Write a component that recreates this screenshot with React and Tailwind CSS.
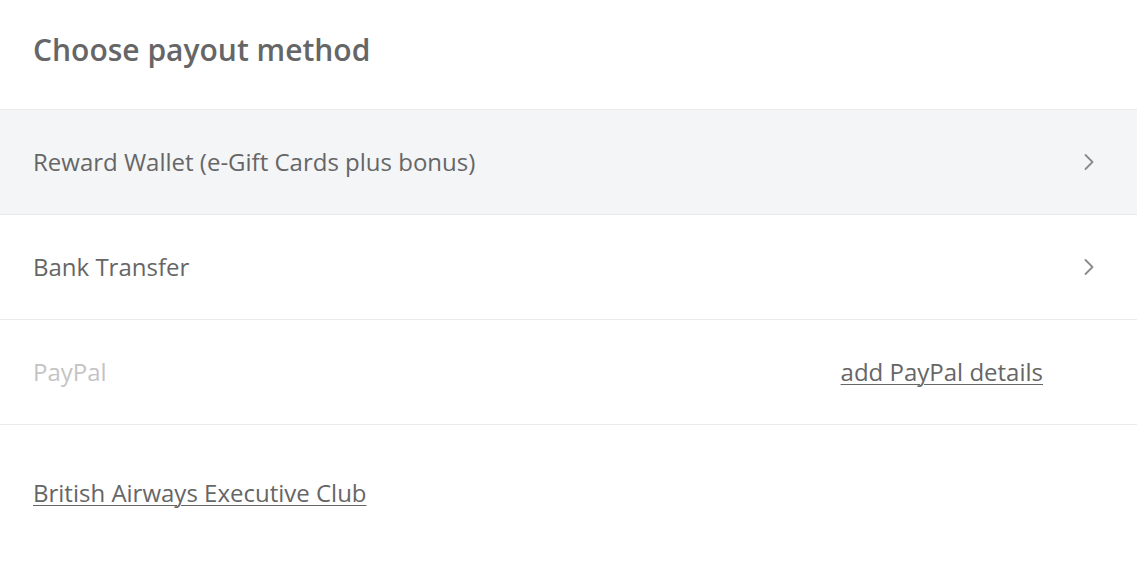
import React from "react";

const Chevron = () => (
  <svg width="12" height="18" viewBox="0 0 12 18" fill="none" className="text-[#8a8a8a]">
    <path d="M2.5 2l7 7-7 7" stroke="currentColor" strokeWidth="1.8" strokeLinecap="round" strokeLinejoin="round" />
  </svg>
);

const App = () => {
  return (
    <div className="w-[1137px] h-[561px] bg-white font-['Open_Sans',sans-serif] text-[#666666] overflow-hidden">
      <div className="h-[110px] flex items-center px-[33px] border-b border-[#ebebeb]">
        <h1 className="text-[30px] font-semibold text-[#666666] -mt-[10px]">Choose payout method</h1>
      </div>

      <button className="w-full h-[105px] flex items-center justify-between pl-[33px] pr-[42px] bg-[#f4f5f7] border-b border-[#e8e8e8] text-left">
        <span className="text-[24px]">Reward Wallet (e-Gift Cards plus bonus)</span>
        <Chevron />
      </button>

      <button className="w-full h-[105px] flex items-center justify-between pl-[33px] pr-[42px] border-b border-[#ebebeb] text-left">
        <span className="text-[24px]">Bank Transfer</span>
        <Chevron />
      </button>

      <div className="w-full h-[105px] flex items-center justify-between pl-[33px] pr-[94px] border-b border-[#ebebeb]">
        <span className="text-[24px] text-[#c4c4c4]">PayPal</span>
        <a href="#" className="text-[24px] underline underline-offset-[3px] decoration-1">add PayPal details</a>
      </div>

      <div className="pt-[50px] pl-[33px]">
        <a href="#" className="text-[24px] underline underline-offset-[3px] decoration-1">British Airways Executive Club</a>
      </div>
    </div>
  );
};

export default App;
